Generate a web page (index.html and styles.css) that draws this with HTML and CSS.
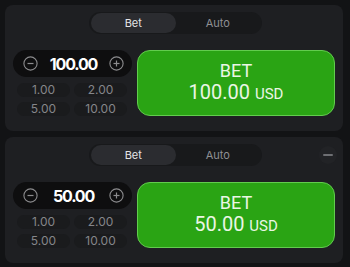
FILE: index.html
```html
<!DOCTYPE html>
<html>
<head>
<meta charset="utf-8">
<link rel="stylesheet" href="styles.css">
</head>
<body>
<div class="stack">
  <section class="panel">
    <div class="tabs-row">
      <div class="tabs">
        <div class="tab active">Bet</div>
        <div class="tab">Auto</div>
      </div>
    </div>
    <div class="controls">
      <div class="left">
        <div class="amount">
          <span class="circ"><svg width="15" height="15" viewBox="0 0 15 15"><circle cx="7.5" cy="7.5" r="6.6" fill="none" stroke="#8c8c8e" stroke-width="1.1"/><line x1="4.5" y1="7.5" x2="10.5" y2="7.5" stroke="#8c8c8e" stroke-width="1.2"/></svg></span>
          <span class="value">100.00</span>
          <span class="circ"><svg width="15" height="15" viewBox="0 0 15 15"><circle cx="7.5" cy="7.5" r="6.6" fill="none" stroke="#8c8c8e" stroke-width="1.1"/><line x1="4.5" y1="7.5" x2="10.5" y2="7.5" stroke="#8c8c8e" stroke-width="1.2"/><line x1="7.5" y1="4.5" x2="7.5" y2="10.5" stroke="#8c8c8e" stroke-width="1.2"/></svg></span>
        </div>
        <div class="quick">
          <div class="q">1.00</div>
          <div class="q">2.00</div>
          <div class="q">5.00</div>
          <div class="q">10.00</div>
        </div>
      </div>
      <div class="bet">
        <div class="bet-label">BET</div>
        <div class="bet-amt">100.00 <span class="cur">USD</span></div>
      </div>
    </div>
  </section>
  <section class="panel">
    <div class="tabs-row">
      <div class="tabs">
        <div class="tab active">Bet</div>
        <div class="tab">Auto</div>
      </div>
      <div class="remove"><span class="dash"></span></div>
    </div>
    <div class="controls">
      <div class="left">
        <div class="amount">
          <span class="circ"><svg width="15" height="15" viewBox="0 0 15 15"><circle cx="7.5" cy="7.5" r="6.6" fill="none" stroke="#8c8c8e" stroke-width="1.1"/><line x1="4.5" y1="7.5" x2="10.5" y2="7.5" stroke="#8c8c8e" stroke-width="1.2"/></svg></span>
          <span class="value">50.00</span>
          <span class="circ"><svg width="15" height="15" viewBox="0 0 15 15"><circle cx="7.5" cy="7.5" r="6.6" fill="none" stroke="#8c8c8e" stroke-width="1.1"/><line x1="4.5" y1="7.5" x2="10.5" y2="7.5" stroke="#8c8c8e" stroke-width="1.2"/><line x1="7.5" y1="4.5" x2="7.5" y2="10.5" stroke="#8c8c8e" stroke-width="1.2"/></svg></span>
        </div>
        <div class="quick">
          <div class="q">1.00</div>
          <div class="q">2.00</div>
          <div class="q">5.00</div>
          <div class="q">10.00</div>
        </div>
      </div>
      <div class="bet">
        <div class="bet-label">BET</div>
        <div class="bet-amt">50.00 <span class="cur">USD</span></div>
      </div>
    </div>
  </section>
</div>
</body>
</html>
```
FILE: styles.css
```css
html, body {
  margin: 0;
  padding: 0;
  background: #121315;
  width: 350px;
  height: 267px;
  overflow: hidden;
  font-family: Inter, Roboto, "Liberation Sans", sans-serif;
}
.stack {
  display: flex;
  flex-direction: column;
  gap: 6px;
  padding: 5px 7px 5px 5px;
}
.panel {
  background: #1e1f22;
  border-radius: 8px;
  height: 126px;
  box-sizing: border-box;
  padding: 7px 8px 0 8px;
}
.tabs-row {
  position: relative;
  display: flex;
  justify-content: center;
}
.tabs {
  display: flex;
  background: #18191b;
  border-radius: 11px;
  padding: 1px 2px;
  width: 173px;
  box-sizing: border-box;
  margin-left: 3px;
}
.tab {
  flex: 1;
  height: 20px;
  line-height: 20px;
  text-align: center;
  font-size: 11px;
  color: #8f9094;
  border-radius: 10px;
}
.tab.active {
  background: #2b2c30;
  color: #e4e4e6;
}
.remove {
  position: absolute;
  right: -2px;
  top: 2px;
  width: 18px;
  height: 18px;
  border-radius: 50%;
  background: #222326;
  display: flex;
  align-items: center;
  justify-content: center;
}
.dash {
  width: 10px;
  height: 2px;
  background: #6e6f73;
  border-radius: 1px;
}
.controls {
  display: flex;
  gap: 5px;
  margin-top: 16px;
}
.left {
  width: 119px;
  display: flex;
  flex-direction: column;
  gap: 6px;
}
.amount {
  height: 27px;
  background: #0e0e0f;
  border-radius: 14px;
  display: flex;
  align-items: center;
  justify-content: space-between;
  padding: 0 8px 0 10px;
}
.circ {
  display: flex;
}
.value {
  color: #ffffff;
  font-weight: 700;
  font-size: 16px;
  letter-spacing: -1.2px;
}
.quick {
  display: grid;
  grid-template-columns: 53px 53px;
  gap: 5px 4px;
  padding: 0 4px;
}
.q {
  height: 14px;
  line-height: 14px;
  border-radius: 7px;
  background: #1a1b1d;
  color: #85868a;
  font-size: 12px;
  text-align: center;
}
.bet {
  flex: 1;
  height: 66px;
  box-sizing: border-box;
  background: #2aa414;
  border: 1px solid #62cc4e;
  border-radius: 13px;
  display: flex;
  flex-direction: column;
  align-items: center;
  justify-content: center;
  color: #eaf6e5;
  font-family: Roboto, Inter, "Liberation Sans", sans-serif;
}
.bet-label {
  font-size: 18px;
  line-height: 21px;
}
.bet-amt {
  font-size: 20px;
  line-height: 23px;
}
.cur {
  font-size: 15px;
}
```
